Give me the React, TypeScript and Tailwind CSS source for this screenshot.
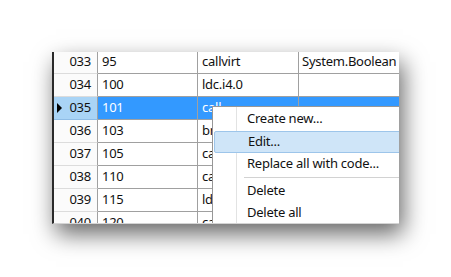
import React from 'react';

interface Row {
    index: string;
    offset: string;
    opcode: string;
    operand: string;
}

const rows: Row[] = [
    { index: '033', offset: '95', opcode: 'callvirt', operand: 'System.Boolean System' },
    { index: '034', offset: '100', opcode: 'ldc.i4.0', operand: '' },
    { index: '035', offset: '101', opcode: 'call', operand: '' },
    { index: '036', offset: '103', opcode: 'brfalse.s', operand: '' },
    { index: '037', offset: '105', opcode: 'call', operand: '' },
    { index: '038', offset: '110', opcode: 'call', operand: '' },
    { index: '039', offset: '115', opcode: 'ldc.i4.1', operand: '' },
    { index: '040', offset: '120', opcode: 'call', operand: '' },
];

const SELECTED = '035';

const MenuItem: React.FC<{ label: string; active?: boolean; className?: string }> = ({ label, active, className = '' }) => (
    <div
        className={`h-[22px] flex items-center pl-[33px] mx-[1px] ${
            active ? 'bg-[#cfe5f8] border border-[#9dc5ea] rounded-[2px] pl-[32px]' : ''
        } ${className}`}
    >
        {label}
    </div>
);

const App: React.FC = () => {
    return (
        <div className="w-[451px] h-[277px] bg-white pt-[52px] pl-[52px] overflow-hidden" style={{ fontFamily: '"Noto Sans", sans-serif' }}>
            <div className="relative w-[347px] h-[172px] overflow-hidden bg-white border-l-2 border-[#2a2a2a] border-b border-b-[#d4d4d4] shadow-[4px_10px_22px_rgba(0,0,0,0.6)] text-[13px] tracking-[-0.25px] text-[#111]">
                <div className="-mt-[1px] flex flex-col">
                    {rows.map((row) => {
                        const sel = row.index === SELECTED;
                        return (
                            <div key={row.index} className="flex h-[23px] shrink-0">
                                <div
                                    className={`w-[44px] shrink-0 flex items-center justify-end pr-[6px] border-r border-r-[#a0a0a0] border-b ${
                                        sel ? 'bg-[#a9d4f6] border-b-[#8fbde6] relative' : 'bg-[#fbfbfb] border-b-[#dcdcdc]'
                                    }`}
                                >
                                    {sel && (
                                        <svg className="absolute left-[3px] top-[6px]" width="6" height="10" viewBox="0 0 6 10">
                                            <path d="M0 0 L5 5 L0 10 Z" fill="#000" />
                                        </svg>
                                    )}
                                    {row.index}
                                </div>
                                <div
                                    className={`w-[100px] shrink-0 flex items-center pl-[4px] border-r border-b border-[#a0a0a0] ${
                                        sel ? 'bg-[#3399ff] text-white' : ''
                                    }`}
                                >
                                    {row.offset}
                                </div>
                                <div
                                    className={`w-[101px] shrink-0 flex items-center pl-[4px] border-r border-b border-[#a0a0a0] ${
                                        sel ? 'bg-[#3399ff] text-white' : ''
                                    }`}
                                >
                                    {row.opcode}
                                </div>
                                <div
                                    className={`w-[140px] shrink-0 flex items-center pl-[3px] border-b border-[#a0a0a0] whitespace-nowrap overflow-hidden ${
                                        sel ? 'bg-[#3399ff] text-white' : ''
                                    }`}
                                >
                                    {row.operand}
                                </div>
                            </div>
                        );
                    })}
                </div>

                {/* context menu */}
                <div className="absolute left-[158px] top-[54px] w-[240px] h-[140px] bg-white border border-[#979797] pt-[1px]">
                    <div className="absolute left-[23px] top-0 bottom-0 w-[1px] bg-[#e2e3e3]" />
                    <div className="relative">
                        <MenuItem label="Create new..." />
                        <MenuItem label="Edit..." active className="mt-[1px]" />
                        <MenuItem label="Replace all with code..." />
                        <div className="h-[5px] flex items-center pl-[31px]">
                            <div className="h-[1px] w-full bg-[#d2d2d2]" />
                        </div>
                        <MenuItem label="Delete" />
                        <MenuItem label="Delete all" />
                    </div>
                </div>
            </div>
        </div>
    );
};

export default App;
